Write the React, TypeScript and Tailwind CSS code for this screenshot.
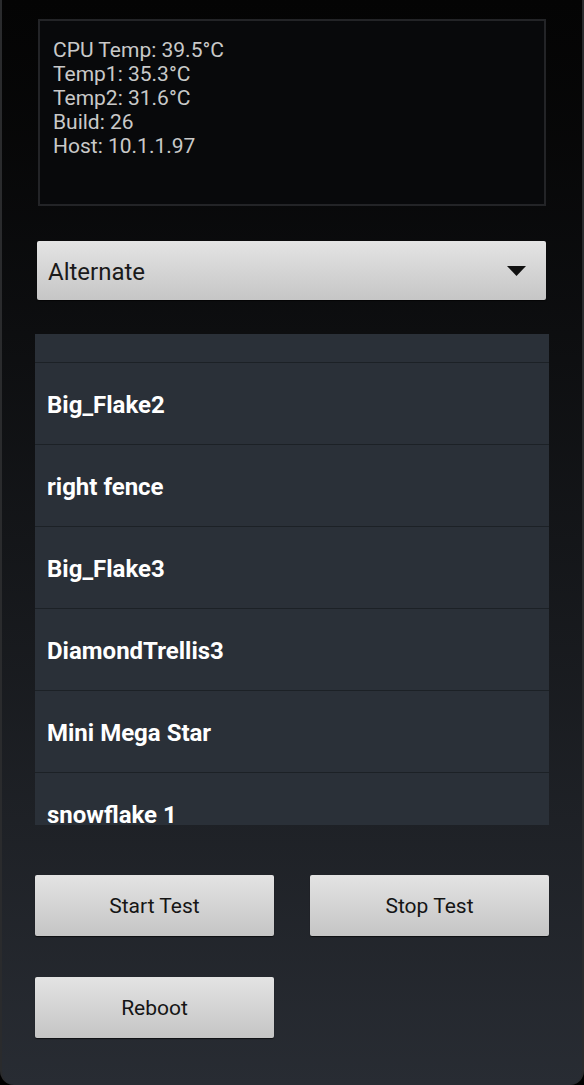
import React from 'react'

const stats = [
  'CPU Temp: 39.5°C',
  'Temp1: 35.3°C',
  'Temp2: 31.6°C',
  'Build: 26',
  'Host: 10.1.1.97'
]

const patterns = [
  '',
  'Big_Flake2',
  'right fence',
  'Big_Flake3',
  'DiamondTrellis3',
  'Mini Mega Star',
  'snowflake 1'
]

function GrayButton({ label }: { label: string }) {
  return (
    <button className="flex h-[61px] w-[239px] items-center justify-center rounded-[2px] bg-gradient-to-b from-[#e3e3e3] to-[#c5c5c5] pt-[3px] text-[21px] text-[#151515] shadow-[0_1px_1px_rgba(0,0,0,0.6)]">
      {label}
    </button>
  )
}

export default function App() {
  return (
    <div
      className="h-[1085px] w-[584px] overflow-hidden bg-black"
      style={{ fontFamily: 'Roboto, "Liberation Sans", sans-serif' }}
    >
      <div className="flex h-full w-full flex-col rounded-b-[14px] border-x-2 border-[#2a2b2d] bg-gradient-to-b from-[#040404] to-[#282c33]">
        {/* status box */}
        <div className="mt-[19px] ml-[36px] h-[187px] w-[508px] border-2 border-[#232427] bg-[#08090b] pt-[17px] pl-[13px]">
          {stats.map((line) => (
            <div key={line} className="text-[21px] leading-[24px] text-[#c9c9c9]">
              {line}
            </div>
          ))}
        </div>

        {/* mode spinner */}
        <div className="mt-[35px] ml-[35px] flex h-[59px] w-[509px] items-center justify-between rounded-[2px] bg-gradient-to-b from-[#e4e4e4] to-[#c6c6c6] pr-[20px] pl-[11px] shadow-[0_1px_1px_rgba(0,0,0,0.6)]">
          <span className="pt-[2px] text-[24px] text-[#1a1a1a]">Alternate</span>
          <svg width="19" height="10" viewBox="0 0 19 10">
            <polygon points="0,0 19,0 9.5,10" fill="#111" />
          </svg>
        </div>

        {/* pattern list, scrolled */}
        <div className="mt-[34px] ml-[33px] h-[491px] w-[514px] overflow-hidden bg-[#2a3038]">
          <div className="-mt-[53px]">
            {patterns.map((name, i) => (
              <div
                key={i}
                className="flex h-[82px] items-center border-b border-[#1c2126] pt-[3px] pl-[12px] text-[24px] font-bold text-white"
              >
                {name}
              </div>
            ))}
          </div>
        </div>

        {/* actions */}
        <div className="mt-[50px] ml-[33px] grid w-[514px] grid-cols-2 gap-x-[36px] gap-y-[41px]">
          <GrayButton label="Start Test" />
          <GrayButton label="Stop Test" />
          <GrayButton label="Reboot" />
        </div>
      </div>
    </div>
  )
}
